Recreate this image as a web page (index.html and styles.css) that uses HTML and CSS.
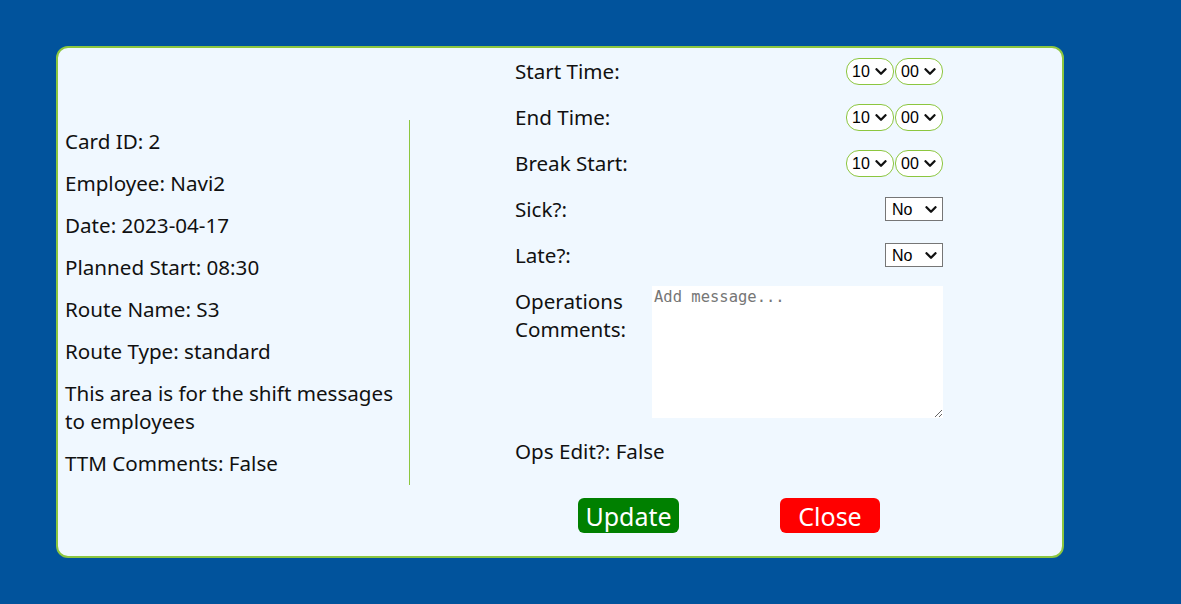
FILE: index.html
```html
<!DOCTYPE html>
<html>
<head>
<meta charset="utf-8">
<link rel="stylesheet" href="styles.css">
</head>
<body>
<div class="card">
  <div class="info">
    <p>Card ID: 2</p>
    <p>Employee: Navi2</p>
    <p>Date: 2023-04-17</p>
    <p>Planned Start: 08:30</p>
    <p>Route Name: S3</p>
    <p>Route Type: standard</p>
    <p>This area is for the shift messages to employees</p>
    <p>TTM Comments: False</p>
  </div>
  <div class="edit">
    <div class="form">
      <label class="lbl">Start Time:</label>
      <div class="ctrl">
        <span class="sel time"><select><option>10</option></select><svg class="chev" viewBox="0 0 12 7"><path d="M1.5 1.2l4.5 4.5 4.5-4.5"/></svg></span><span class="sel time"><select><option>00</option></select><svg class="chev" viewBox="0 0 12 7"><path d="M1.5 1.2l4.5 4.5 4.5-4.5"/></svg></span>
      </div>
      <label class="lbl">End Time:</label>
      <div class="ctrl">
        <span class="sel time"><select><option>10</option></select><svg class="chev" viewBox="0 0 12 7"><path d="M1.5 1.2l4.5 4.5 4.5-4.5"/></svg></span><span class="sel time"><select><option>00</option></select><svg class="chev" viewBox="0 0 12 7"><path d="M1.5 1.2l4.5 4.5 4.5-4.5"/></svg></span>
      </div>
      <label class="lbl">Break Start:</label>
      <div class="ctrl">
        <span class="sel time"><select><option>10</option></select><svg class="chev" viewBox="0 0 12 7"><path d="M1.5 1.2l4.5 4.5 4.5-4.5"/></svg></span><span class="sel time"><select><option>00</option></select><svg class="chev" viewBox="0 0 12 7"><path d="M1.5 1.2l4.5 4.5 4.5-4.5"/></svg></span>
      </div>
      <label class="lbl">Sick?:</label>
      <div class="ctrl">
        <span class="sel yn"><select><option>No</option></select><svg class="chev" viewBox="0 0 12 7"><path d="M1.5 1.2l4.5 4.5 4.5-4.5"/></svg></span>
      </div>
      <label class="lbl">Late?:</label>
      <div class="ctrl">
        <span class="sel yn"><select><option>No</option></select><svg class="chev" viewBox="0 0 12 7"><path d="M1.5 1.2l4.5 4.5 4.5-4.5"/></svg></span>
      </div>
      <label class="lbl">Operations Comments:</label>
      <div class="ctrl">
        <textarea class="msg" placeholder="Add message..."></textarea>
      </div>
      <div class="full">Ops Edit?: False</div>
    </div>
    <div class="buttons">
      <button class="btn update">Update</button>
      <button class="btn close">Close</button>
    </div>
  </div>
</div>
</body>
</html>
```
FILE: styles.css
```css
html, body {
  margin: 0;
  padding: 0;
}
body {
  background: #01539c;
  font-family: "Noto Sans", "Open Sans", sans-serif;
  color: #111;
  height: 604px;
  padding: 46px 0 0 56px;
  box-sizing: border-box;
}
.card {
  width: 1008px;
  height: 512px;
  box-sizing: border-box;
  background: #f0f8ff;
  border: 2px solid #8cc63f;
  border-radius: 12px;
  display: flex;
  align-items: flex-start;
  padding: 0 0 0 7px;
}
.info {
  align-self: center;
  width: 344px;
  border-right: 1px solid #8cc63f;
  padding: 7px 0 8px;
  display: flex;
  flex-direction: column;
  gap: 14px;
  font-size: 20.6px;
  line-height: 28px;
}
.info p {
  margin: 0;
}
.edit {
  margin-left: 105px;
  width: 428px;
  padding-top: 9px;
}
.form {
  display: grid;
  grid-template-columns: 137px 291px;
  row-gap: 18px;
  font-size: 20.6px;
  line-height: 28px;
}
.lbl {
  display: block;
}
.ctrl {
  display: flex;
  justify-content: flex-end;
  align-items: center;
}
.sel {
  position: relative;
  display: block;
}
.sel select {
  appearance: none;
  -webkit-appearance: none;
  display: block;
  box-sizing: border-box;
  background: #fff;
  font-family: "Liberation Sans", Arial, sans-serif;
  font-size: 16px;
  color: #000;
  margin: 0;
  outline: none;
}
.chev {
  position: absolute;
  width: 12px;
  height: 7px;
  top: 50%;
  margin-top: -3px;
  fill: none;
  stroke: #111;
  stroke-width: 2.3;
  stroke-linecap: round;
  stroke-linejoin: round;
  pointer-events: none;
}
.time select {
  width: 48px;
  height: 27px;
  border: 1px solid #8cc63f;
  border-radius: 13px;
  padding: 0 0 0 5px;
}
.time .chev {
  left: 29px;
}
.time + .time {
  margin-left: 1px;
}
.yn select {
  width: 58px;
  height: 24px;
  border: 1px solid #767676;
  border-radius: 0;
  padding: 0 0 0 6px;
}
.yn .chev {
  left: 40px;
}
.msg {
  width: 291px;
  height: 132px;
  box-sizing: border-box;
  border: none;
  background: #fff;
  font-family: "DejaVu Sans Mono", monospace;
  font-size: 15.5px;
  padding: 2px 2px;
  margin: 0;
  display: block;
  align-self: flex-start;
  margin-top: -1px;
}
.msg::placeholder {
  color: #767676;
}
.full {
  grid-column: 1 / span 2;
  margin-top: 1px;
}
.buttons {
  display: flex;
  justify-content: center;
  gap: 101px;
  margin-top: 33px;
}
.btn {
  height: 35px;
  border: none;
  border-radius: 6px;
  color: #fff;
  font-family: "Noto Sans", "Open Sans", sans-serif;
  font-size: 25px;
  line-height: 36px;
  padding: 0;
}
.update {
  width: 101px;
  background: #008000;
}
.close {
  width: 100px;
  background: #ff0000;
}
```
